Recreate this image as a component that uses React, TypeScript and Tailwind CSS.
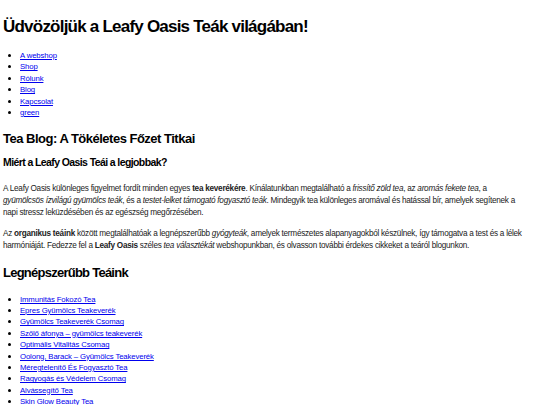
const navLinks = ['A webshop', 'Shop', 'Rólunk', 'Blog', 'Kapcsolat', 'green'];

const teas = [
  'Immunitás Fokozó Tea',
  'Epres Gyümölcs Teakeverék',
  'Gyümölcs Teakeverék Csomag',
  'Szőlő áfonya – gyümölcs teakeverék',
  'Optimális Vitalitás Csomag',
  'Oolong, Barack – Gyümölcs Teakeverék',
  'Méregtelenítő És Fogyasztó Tea',
  'Ragyogás és Védelem Csomag',
  'Alvássegítő Tea',
  'Skin Glow Beauty Tea',
];

function LinkList({ items }: { items: string[] }) {
  return (
    <ul className="list-disc pl-[17px] text-[7.75px] leading-[11.4px] tracking-[-0.12px]">
      {items.map((item) => (
        <li key={item} className="marker:text-black marker:text-[9px]">
          <a href="#" className="text-[#0000ee] underline">
            {item}
          </a>
        </li>
      ))}
    </ul>
  );
}

export default function App() {
  return (
    <div className="min-h-screen bg-white px-[3px] text-black font-['Liberation_Sans',sans-serif]">
      <h1 className="pt-[15px] text-[17px] font-bold leading-[24px] tracking-[-0.78px]">
        Üdvözöljük a Leafy Oasis Teák világában!
      </h1>

      <nav className="mt-[11px]">
        <LinkList items={navLinks} />
      </nav>

      <h2 className="mt-[12px] text-[13px] font-bold leading-[18px] tracking-[-0.5px]">
        Tea Blog: A Tökéletes Főzet Titkai
      </h2>

      <h3 className="mt-[6.5px] text-[10.5px] font-bold leading-[15px] tracking-[-0.6px]">
        Miért a Leafy Oasis Teái a legjobbak?
      </h3>

      <div className="mt-[13px] whitespace-nowrap text-[8.2px] leading-[11.8px] tracking-[-0.26px] text-[#222]">
        <p>
          A Leafy Oasis különleges figyelmet fordít minden egyes <b>tea keverékére</b>. Kínálatunkban megtalálható a{' '}
          <i>frissítő zöld tea</i>, az <i>aromás fekete tea</i>, a<br />
          <i>gyümölcsös ízvilágú gyümölcs teák</i>, és a <i>testet-lelket támogató fogyasztó teák</i>. Mindegyik tea
          különleges aromával és hatással bír, amelyek segítenek a<br />
          napi stressz leküzdésében és az egészség megőrzésében.
        </p>
        <p className="mt-[10px]">
          Az <b>organikus teáink</b> között megtalálhatóak a legnépszerűbb <i>gyógyteák</i>, amelyek természetes
          alapanyagokból készülnek, így támogatva a test és a lélek
          <br />
          harmóniáját. Fedezze fel a <b>Leafy Oasis</b> széles <i>tea választékát</i> webshopunkban, és olvasson további
          érdekes cikkeket a teáról blogunkon.
        </p>
      </div>

      <h2 className="mt-[12px] text-[13px] font-bold leading-[18px] tracking-[-0.75px]">Legnépszerűbb Teáink</h2>

      <div className="mt-[11.6px]">
        <LinkList items={teas} />
      </div>
    </div>
  );
}
